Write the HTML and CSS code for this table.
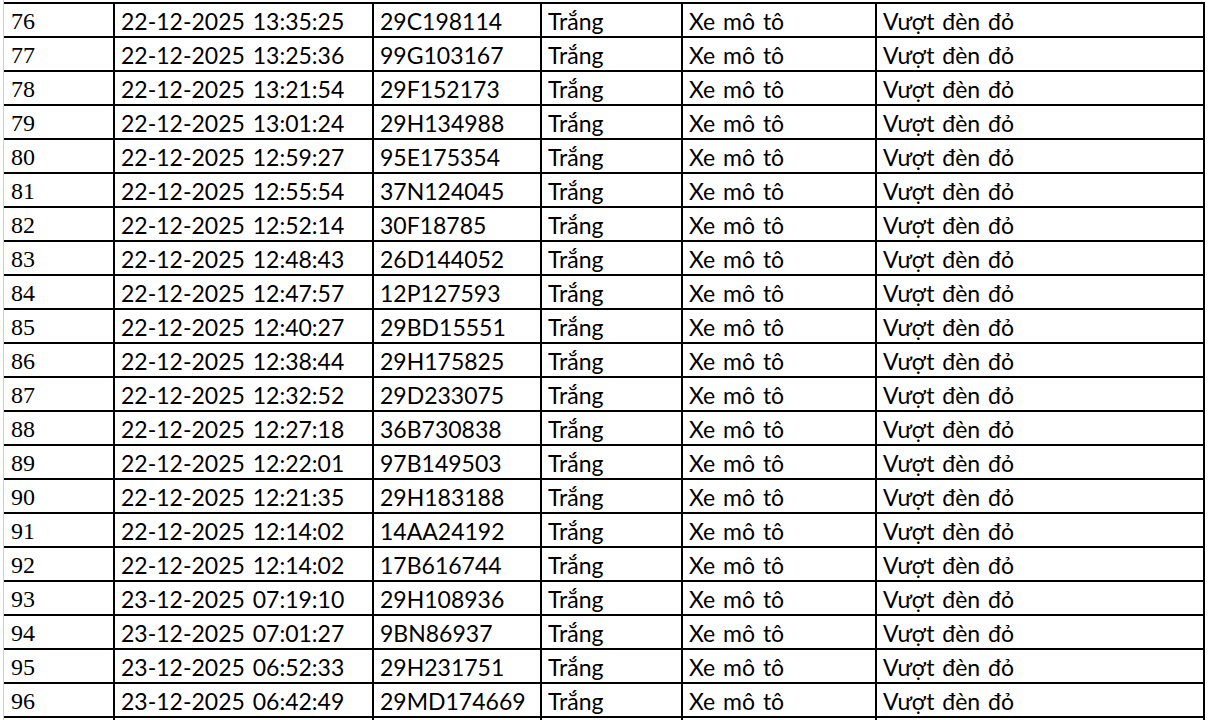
FILE: index.html
```html
<!DOCTYPE html>
<html lang="vi">
<head>
<meta charset="utf-8">
<title>Danh sách vi phạm</title>
<link rel="stylesheet" href="styles.css">
</head>
<body>
<div class="sheet">
  <div class="table">
    <div class="row"><div class="cell num">76</div><div class="cell">22-12-2025 13:35:25</div><div class="cell">29C198114</div><div class="cell">Trắng</div><div class="cell">Xe mô tô</div><div class="cell">Vượt đèn đỏ</div></div>
    <div class="row"><div class="cell num">77</div><div class="cell">22-12-2025 13:25:36</div><div class="cell">99G103167</div><div class="cell">Trắng</div><div class="cell">Xe mô tô</div><div class="cell">Vượt đèn đỏ</div></div>
    <div class="row"><div class="cell num">78</div><div class="cell">22-12-2025 13:21:54</div><div class="cell">29F152173</div><div class="cell">Trắng</div><div class="cell">Xe mô tô</div><div class="cell">Vượt đèn đỏ</div></div>
    <div class="row"><div class="cell num">79</div><div class="cell">22-12-2025 13:01:24</div><div class="cell">29H134988</div><div class="cell">Trắng</div><div class="cell">Xe mô tô</div><div class="cell">Vượt đèn đỏ</div></div>
    <div class="row"><div class="cell num">80</div><div class="cell">22-12-2025 12:59:27</div><div class="cell">95E175354</div><div class="cell">Trắng</div><div class="cell">Xe mô tô</div><div class="cell">Vượt đèn đỏ</div></div>
    <div class="row"><div class="cell num">81</div><div class="cell">22-12-2025 12:55:54</div><div class="cell">37N124045</div><div class="cell">Trắng</div><div class="cell">Xe mô tô</div><div class="cell">Vượt đèn đỏ</div></div>
    <div class="row"><div class="cell num">82</div><div class="cell">22-12-2025 12:52:14</div><div class="cell">30F18785</div><div class="cell">Trắng</div><div class="cell">Xe mô tô</div><div class="cell">Vượt đèn đỏ</div></div>
    <div class="row"><div class="cell num">83</div><div class="cell">22-12-2025 12:48:43</div><div class="cell">26D144052</div><div class="cell">Trắng</div><div class="cell">Xe mô tô</div><div class="cell">Vượt đèn đỏ</div></div>
    <div class="row"><div class="cell num">84</div><div class="cell">22-12-2025 12:47:57</div><div class="cell">12P127593</div><div class="cell">Trắng</div><div class="cell">Xe mô tô</div><div class="cell">Vượt đèn đỏ</div></div>
    <div class="row"><div class="cell num">85</div><div class="cell">22-12-2025 12:40:27</div><div class="cell">29BD15551</div><div class="cell">Trắng</div><div class="cell">Xe mô tô</div><div class="cell">Vượt đèn đỏ</div></div>
    <div class="row"><div class="cell num">86</div><div class="cell">22-12-2025 12:38:44</div><div class="cell">29H175825</div><div class="cell">Trắng</div><div class="cell">Xe mô tô</div><div class="cell">Vượt đèn đỏ</div></div>
    <div class="row"><div class="cell num">87</div><div class="cell">22-12-2025 12:32:52</div><div class="cell">29D233075</div><div class="cell">Trắng</div><div class="cell">Xe mô tô</div><div class="cell">Vượt đèn đỏ</div></div>
    <div class="row"><div class="cell num">88</div><div class="cell">22-12-2025 12:27:18</div><div class="cell">36B730838</div><div class="cell">Trắng</div><div class="cell">Xe mô tô</div><div class="cell">Vượt đèn đỏ</div></div>
    <div class="row"><div class="cell num">89</div><div class="cell">22-12-2025 12:22:01</div><div class="cell">97B149503</div><div class="cell">Trắng</div><div class="cell">Xe mô tô</div><div class="cell">Vượt đèn đỏ</div></div>
    <div class="row"><div class="cell num">90</div><div class="cell">22-12-2025 12:21:35</div><div class="cell">29H183188</div><div class="cell">Trắng</div><div class="cell">Xe mô tô</div><div class="cell">Vượt đèn đỏ</div></div>
    <div class="row"><div class="cell num">91</div><div class="cell">22-12-2025 12:14:02</div><div class="cell">14AA24192</div><div class="cell">Trắng</div><div class="cell">Xe mô tô</div><div class="cell">Vượt đèn đỏ</div></div>
    <div class="row"><div class="cell num">92</div><div class="cell">22-12-2025 12:14:02</div><div class="cell">17B616744</div><div class="cell">Trắng</div><div class="cell">Xe mô tô</div><div class="cell">Vượt đèn đỏ</div></div>
    <div class="row"><div class="cell num">93</div><div class="cell">23-12-2025 07:19:10</div><div class="cell">29H108936</div><div class="cell">Trắng</div><div class="cell">Xe mô tô</div><div class="cell">Vượt đèn đỏ</div></div>
    <div class="row"><div class="cell num">94</div><div class="cell">23-12-2025 07:01:27</div><div class="cell">9BN86937</div><div class="cell">Trắng</div><div class="cell">Xe mô tô</div><div class="cell">Vượt đèn đỏ</div></div>
    <div class="row"><div class="cell num">95</div><div class="cell">23-12-2025 06:52:33</div><div class="cell">29H231751</div><div class="cell">Trắng</div><div class="cell">Xe mô tô</div><div class="cell">Vượt đèn đỏ</div></div>
    <div class="row"><div class="cell num">96</div><div class="cell">23-12-2025 06:42:49</div><div class="cell">29MD174669</div><div class="cell">Trắng</div><div class="cell">Xe mô tô</div><div class="cell">Vượt đèn đỏ</div></div>
    <div class="row"><div class="cell num"></div><div class="cell"></div><div class="cell"></div><div class="cell"></div><div class="cell"></div><div class="cell"></div></div>
  </div>
</div>
</body>
</html>
```
FILE: styles.css
```css
html, body {
  margin: 0;
  padding: 0;
  background: #fff;
  overflow: hidden;
}

.sheet {
  margin-left: 3px;
  border-left: 1px solid #cfcfcf;
  height: 720px;
  padding-top: 2px;
  box-sizing: border-box;
}

.table {
  width: 1201px;
  border-top: 2px solid #000;
}

.row {
  display: grid;
  grid-template-columns: 111px 259px 168px 141px 194px 328px;
  height: 34px;
  border-bottom: 2px solid #000;
  box-sizing: border-box;
}

.cell {
  border-right: 2px solid #000;
  padding-left: 6px;
  padding-top: 2px;
  font-family: "Lato", "Liberation Sans", sans-serif;
  font-size: 23px;
  word-spacing: 2px;
  line-height: 30px;
  color: #000;
  white-space: nowrap;
  overflow: hidden;
}

.cell.num {
  font-family: "Liberation Serif", "Times New Roman", serif;
  font-size: 24px;
  word-spacing: 0;
  padding-left: 7px;
}
```
